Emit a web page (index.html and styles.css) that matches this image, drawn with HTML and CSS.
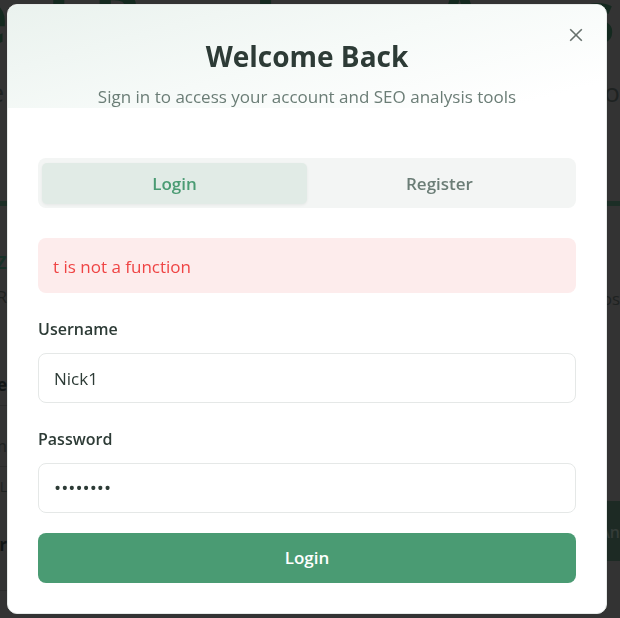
FILE: index.html
```html
<!DOCTYPE html>
<html lang="en">
<head>
<meta charset="utf-8">
<meta name="viewport" content="width=device-width, initial-scale=1">
<title>Welcome Back</title>
<link rel="stylesheet" href="styles.css">
</head>
<body>
<div class="page" aria-hidden="true">
  <div class="hero"><span>e</span><span>l</span><span>R</span><span>l</span><span>A</span><span>s</span></div>
  <div class="tagline"><span>e</span><span>o</span></div>
  <div class="columns">
    <div class="column">
      <p class="name">z</p>
      <p class="text">R</p>
      <p class="cell strong">e</p>
      <p class="cell">m</p>
      <p class="cell small">L</p>
      <p class="cell last strong">r</p>
    </div>
    <div class="column side">
      <p class="text">os</p>
      <div class="analyze">An</div>
    </div>
  </div>
</div>
<div class="overlay">
  <main class="modal" role="dialog" aria-modal="true" aria-labelledby="title">
    <header class="modal-header">
      <h1 id="title">Welcome Back</h1>
      <p>Sign in to access your account and SEO analysis tools</p>
      <button class="close" type="button" aria-label="Close">
        <svg width="14" height="14" viewBox="0 0 14 14" fill="none" stroke="currentColor" stroke-width="1.6"><path d="M1.2 1.2 12.8 12.8M12.8 1.2 1.2 12.8"/></svg>
      </button>
    </header>
    <div class="modal-body">
      <div class="tabs" role="tablist">
        <button class="tab active" type="button" role="tab" aria-selected="true">Login</button>
        <button class="tab" type="button" role="tab" aria-selected="false">Register</button>
      </div>
      <div class="alert" role="alert">t is not a function</div>
      <form class="form">
        <div class="field">
          <label for="username">Username</label>
          <input id="username" type="text" value="Nick1">
        </div>
        <div class="field">
          <label for="password">Password</label>
          <input id="password" type="password" value="password">
        </div>
        <button class="submit" type="submit">Login</button>
      </form>
    </div>
  </main>
</div>
</body>
</html>
```
FILE: styles.css
```css
* { box-sizing: border-box; }
body, h1, p { margin: 0; }
body {
  font-family: "Open Sans", "Noto Sans", sans-serif;
  font-size: 17px;
  line-height: 24px;
  color: #2d3b36;
  background: #333333;
}
button, input { font: inherit; }

/* Dimmed page behind the dialog */
.page {
  height: 100vh;
  overflow: hidden;
  color: #1e2221;
}
.hero {
  display: grid;
  grid-template-columns: 7% 8% 26% 29% 26% 4%;
  height: 55px;
  font-size: 74px;
  font-weight: 700;
  line-height: 32px;
  color: #14291f;
}
.hero span:first-child { display: flex; justify-content: flex-end; width: 8px; }
.hero span:nth-child(2) { padding-left: 4px; }
.hero span:last-child { display: flex; justify-content: flex-end; width: 20px; }
.tagline {
  display: flex;
  justify-content: space-between;
  height: 146px;
  padding-top: 19px;
  font-size: 26px;
  line-height: 36px;
}
.tagline span:first-child { display: flex; justify-content: flex-end; width: 4px; }
.columns {
  display: flex;
  justify-content: space-between;
  border-top: 5px solid #1c2e26;
}
.column { width: 50px; padding-top: 42px; }
.column > p { display: flex; justify-content: flex-end; width: 7px; }
.name { height: 34px; font-size: 24px; font-weight: 600; color: #173128; }
.text { height: 63px; line-height: 30px; }
.cell { height: 61px; padding-top: 28px; border-bottom: 1px solid #2c2c2c; }
.strong { font-weight: 700; color: #111515; }
.small { height: 48px; padding-top: 8px; font-size: 14px; border: 0; }
.last { height: 76px; padding-top: 18px; }
.column.side { width: 14px; padding-top: 78px; }
.side > .text { height: 217px; width: 14px; }
.analyze {
  display: flex;
  justify-content: flex-end;
  height: 60px;
  overflow: hidden;
  font-size: 16px;
  font-weight: 600;
  line-height: 62px;
  background: #1d2a24;
  color: #343c38;
}

.overlay {
  position: fixed;
  inset: 0;
  display: flex;
  align-items: flex-start;
  justify-content: center;
  padding: 4px 13px 4px 7px;
}
.modal {
  position: relative;
  width: 100%;
  max-width: 600px;
  overflow: hidden;
  border: 1px solid #e6eae8;
  border-radius: 10px;
  background: #ffffff;
}
.modal-header {
  padding: 31px 30px 0;
  text-align: center;
  background: linear-gradient(165deg, #eaf2ee 0%, #f6faf8 50%, #ffffff 90%);
}
.modal-header h1 {
  margin-bottom: 10px;
  font-size: 28px;
  line-height: 40px;
  font-weight: 700;
}
.modal-header p { line-height: 22px; color: #6b7d76; }
.close {
  position: absolute;
  top: 20px;
  right: 20px;
  display: grid;
  place-items: center;
  width: 20px;
  height: 20px;
  padding: 0;
  border: 0;
  background: none;
  color: #66706c;
}
.modal-body { padding: 50px 30px 30px; }
.tabs {
  display: flex;
  height: 50px;
  margin-bottom: 30px;
  padding: 5px 4px 4px;
  border-radius: 8px;
  background: #f3f5f4;
}
.tab {
  flex: 1;
  padding: 0;
  border: 0;
  border-radius: 5px;
  background: none;
  color: #6b7d76;
  font-weight: 600;
}
.tab.active {
  background: #e1ebe6;
  color: #4a9b73;
  box-shadow: 0 1px 3px rgba(0, 0, 0, 0.06);
}
.alert {
  margin-bottom: 24px;
  padding: 17px 15px 14px;
  border-radius: 8px;
  background: #fdecec;
  color: #ef4444;
}
.form, .field { display: flex; flex-direction: column; }
.field { gap: 12px; margin-bottom: 24px; }
.field:nth-child(2) { margin-bottom: 20px; }
.field label { font-size: 16px; font-weight: 600; }
.field input {
  width: 100%;
  height: 50px;
  padding: 0 15px;
  border: 1px solid #e5e8e7;
  border-radius: 8px;
  outline: 0;
  background: #ffffff;
  color: #2d3b36;
}
.field input[type="password"] { font-size: 19px; }
.submit {
  height: 50px;
  border: 0;
  border-radius: 8px;
  background: #4a9b73;
  color: #ffffff;
  font-weight: 600;
}
```
